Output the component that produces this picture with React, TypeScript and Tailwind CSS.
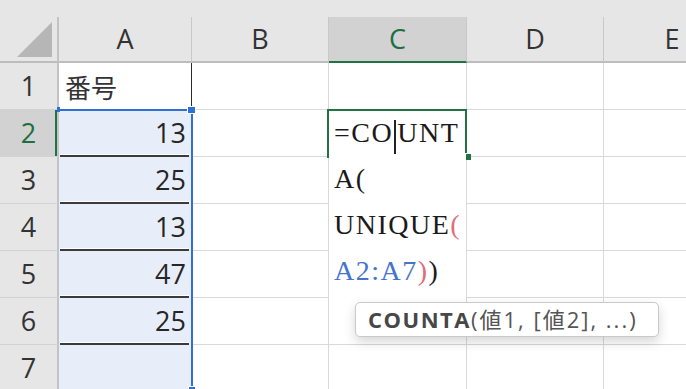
import clsx from "clsx";

const values = ["番号", "13", "25", "13", "47", "25", ""];

function ColHeader({ label, active, w }: { label: string; active?: boolean; w: string }) {
  return (
    <div
      className={clsx(
        "flex shrink-0 items-center justify-center border-r border-r-[#c8c8c8] border-b-2",
        w,
        active ? "bg-[#d2d2d2] border-b-[#217346] text-[#1f6e43]" : "bg-[#e6e6e6] border-b-[#bdbdbd] text-[#333]"
      )}
    >
      {label}
    </div>
  );
}

function Row({ n, value }: { n: number; value: string }) {
  const active = n === 2;
  const inRange = n >= 2;
  const divider = n >= 2 && n <= 6;
  return (
    <div className="flex h-[47px]">
      <div
        className={clsx(
          "flex w-[59px] shrink-0 items-center justify-center border-r-2 border-r-[#c3c3c3] border-b border-b-[#d3d3d3]",
          active ? "bg-[#d2d2d2] text-[#1f6e43] shadow-[inset_-2px_0_0_#217346]" : "bg-[#e6e6e6] text-[#333]"
        )}
      >
        {n}
      </div>
      {inRange ? (
        <div className="flex w-[133px] shrink-0 flex-col bg-[#e8eef9]">
          <div className="flex flex-1 items-center justify-end pr-[6px] pt-[2px] text-[#262626]">{value}</div>
          {divider && <div className="ml-[1px] mr-[3px] h-[3px] border-t border-white bg-[#3b3b3b]" />}
        </div>
      ) : (
        <div className="flex w-[133px] shrink-0 items-center border-r border-r-[#2b2b2b] border-b border-b-[#d9d9d9] pl-[6px] pt-[1px] font-['Noto_Sans_CJK_JP',sans-serif] text-[26px] text-[#333]">
          {value}
        </div>
      )}
      <div className="w-[137px] shrink-0 border-r border-b border-[#d9d9d9] bg-white" />
      <div className="w-[138px] shrink-0 border-r border-b border-[#d9d9d9] bg-white" />
      <div className="w-[137px] shrink-0 border-r border-b border-[#d9d9d9] bg-white" />
      <div className="flex-1 border-b border-[#d9d9d9] bg-white" />
    </div>
  );
}

export default function App() {
  return (
    <div className="relative h-[389px] w-[686px] overflow-hidden bg-white font-['Open_Sans',sans-serif] text-[27px]">
      <div className="h-[17px] bg-[#e6e6e6]" />
      <div className="flex h-[46px]">
        <div className="flex w-[59px] shrink-0 items-end justify-end border-r-2 border-r-[#c3c3c3] border-b-2 border-b-[#bdbdbd] bg-[#e6e6e6] pr-[5px] pb-[4px]">
          <svg width="35" height="35" viewBox="0 0 35 35">
            <polygon points="0,35 35,35 35,0" fill="#b6b6b6" />
          </svg>
        </div>
        <ColHeader label="A" w="w-[133px]" />
        <ColHeader label="B" w="w-[137px]" />
        <ColHeader label="C" w="w-[138px]" active />
        <ColHeader label="D" w="w-[137px]" />
        <ColHeader label="E" w="w-[137px]" />
      </div>
      {values.map((v, i) => (
        <Row key={i} n={i + 1} value={v} />
      ))}

      {/* selection A2:A7 */}
      <div className="absolute left-[60px] top-[109px] h-[2px] w-[130px] bg-[#2f6fd6]" />
      <div className="absolute left-[191px] top-[109px] h-[280px] w-[2px] bg-[#2f6fd6]" />
      <div className="absolute left-[57px] top-[107px] h-[5px] w-[3px] bg-[#2f6fd6]" />
      <div className="absolute left-[187px] top-[106px] h-[8px] w-[9px] border border-white bg-[#2f6fd6]" />
      <div className="absolute left-[188px] top-[386px] h-[7px] w-[8px] border border-white bg-[#2f6fd6]" />

      {/* in-cell editor C2 */}
      <div className="absolute left-[329px] top-[110px] h-[188px] w-[137px] bg-white pl-[5px] font-['Liberation_Serif',serif] text-[28px] leading-[47px] tracking-[1.5px] text-[#1a1a1a]">
        <div className="-mt-[1px] whitespace-nowrap">
          =CO<span className="mx-[1px] inline-block h-[34px] w-[2px] bg-[#222] align-[-12px]" />UNT
        </div>
        <div className="-mt-[1px]">A(</div>
        <div className="-mt-[1px]">
          UNIQUE<span className="text-[#e26d7b]">(</span>
        </div>
        <div className="-mt-[1px]">
          <span className="text-[#4573cf]">A2:A7</span>
          <span className="text-[#e26d7b]">)</span>)
        </div>
      </div>
      <div className="absolute left-[327px] top-[109px] h-[2px] w-[140px] bg-[#217346]" />
      <div className="absolute left-[327px] top-[109px] h-[49px] w-[2px] bg-[#217346]" />
      <div className="absolute left-[465px] top-[109px] h-[44px] w-[2px] bg-[#217346]" />
      <div className="absolute left-[465px] top-[153px] h-[7px] w-[6px] border-l border-t border-white bg-[#217346]" />

      {/* function tooltip */}
      <div className="absolute left-[355px] top-[302px] flex h-[35px] w-[304px] items-center rounded-[5px] border border-[#c9c9c9] bg-white pl-[12px] text-[22px] text-[#555] shadow-[0_5px_12px_rgba(0,0,0,0.16)]">
        <span className="font-bold tracking-[1.5px] text-[#474747]">COUNTA</span>
        <span className="font-['Open_Sans','Noto_Sans_CJK_JP',sans-serif] tracking-[2px]">(値1, [値2], ...)</span>
      </div>
    </div>
  );
}
